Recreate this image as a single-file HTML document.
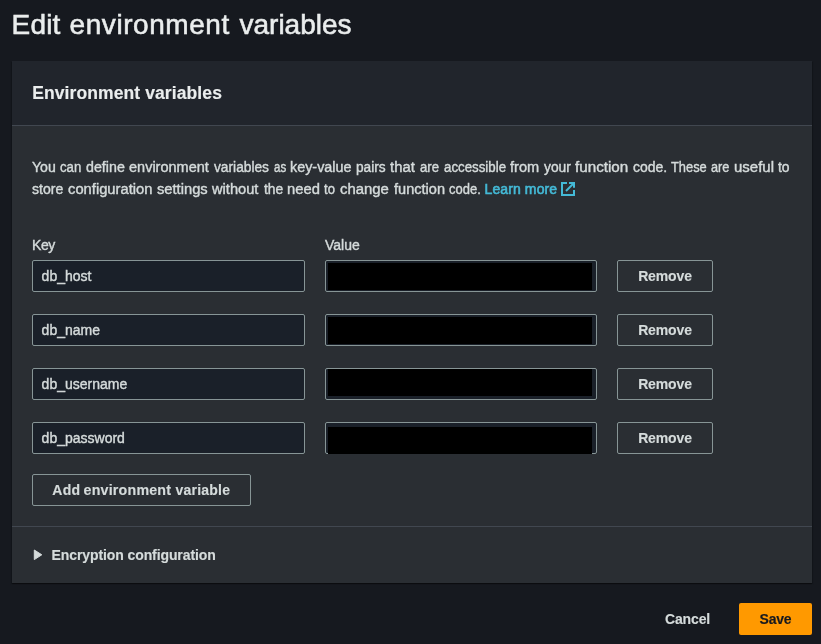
<!DOCTYPE html>
<html lang="en">
<head>
<meta charset="utf-8">
<title>Edit environment variables</title>
<style>
*{box-sizing:border-box;margin:0;padding:0}
html,body{width:821px;height:644px;overflow:hidden;background:#16191f}
body{-webkit-text-stroke:0.4px;position:relative;font-family:"Liberation Sans",Arial,sans-serif;color:#d5dbdb;font-size:14px;line-height:22px;-webkit-font-smoothing:antialiased}
h1{will-change:transform;-webkit-text-stroke:0.55px;position:absolute;left:11.6px;top:7px;width:400px;height:36px;font-size:28px;line-height:36px;font-weight:400;color:#eaeded;white-space:nowrap}
.card{will-change:transform;position:absolute;left:12px;top:61px;width:800px;height:522px;background:#2a2e33;box-shadow:0 1px 1px 0 rgba(0,0,0,.3),1px 1px 1px 0 rgba(0,0,0,.15),-1px 1px 1px 0 rgba(0,0,0,.15)}
.card-h{position:absolute;left:0;top:0;width:800px;height:65px;background:#21252c;border-bottom:1px solid #414750}
h2{-webkit-text-stroke:0.15px;position:absolute;left:20.2px;top:21px;letter-spacing:0.1px;font-size:17.5px;line-height:22px;font-weight:700;color:#eaeded;white-space:nowrap}
.desc{position:absolute;left:20.2px;top:95px;width:770px;font-size:14px;line-height:22px;color:#d5dbdb}
.desc a{color:#44b9d6;text-decoration:none;font-weight:400;-webkit-text-stroke:0.6px #44b9d6;position:absolute;left:452.4px;top:22px;letter-spacing:0.1px}
.w{position:absolute;white-space:nowrap;transform-origin:0 50%}
.lbl{position:absolute;top:173px;font-size:14px;line-height:22px;color:#d5dbdb}
.inp{position:absolute;height:32px;width:273px;border:1px solid #879596;border-radius:2px;background:#1a2029;padding:4px 8.6px;font-size:14px;line-height:22px;color:#d5dbdb;white-space:nowrap}
.red{position:absolute;background:#000}
.btn{-webkit-text-stroke:0.15px;letter-spacing:-0.12px;position:absolute;height:32px;border:1px solid #879596;border-radius:2px;font-size:14px;line-height:22px;font-weight:700;color:#d5dbdb;text-align:center;padding-top:4px;white-space:nowrap}
.hr{position:absolute;left:0;top:465px;width:800px;height:1px;background:#414750}
.enc{-webkit-text-stroke:0.15px;position:absolute;letter-spacing:-0.1px;left:39.6px;top:483px;font-size:14px;line-height:22px;font-weight:700;color:#d5dbdb;white-space:nowrap}
.cancel{will-change:transform;-webkit-text-stroke:0.15px;letter-spacing:-0.15px;position:absolute;left:664.6px;top:608px;font-size:14px;line-height:22px;font-weight:700;color:#d5dbdb}
.save{will-change:transform;-webkit-text-stroke:0.15px;letter-spacing:-0.2px;position:absolute;left:739px;top:603px;width:73px;height:32px;background:#ff9900;border-radius:2px;font-size:14px;line-height:22px;font-weight:700;color:#16191f;text-align:center;padding-top:5px}
</style>
</head>
<body>
<h1><span style="position:absolute;left:-0.4px;letter-spacing:0.15px">Edit</span> <span style="position:absolute;left:57.6px;letter-spacing:0.55px">environment</span> <span style="position:absolute;left:227.5px;letter-spacing:0.0px">variables</span></h1>
<div class="card">
  <div class="card-h"><h2>Environment variables</h2></div>
  <div class="desc"><span class="w" style="left:-0.14px;top:0px;transform:scaleX(1.0068)">You</span> <span class="w" style="left:27.81px;top:0px;transform:scaleX(0.9452)">can</span> <span class="w" style="left:53.38px;top:0px;transform:scaleX(1.0178)">define</span> <span class="w" style="left:96.68px;top:0px;transform:scaleX(1.0360)">environment</span> <span class="w" style="left:181.80px;top:0px;transform:scaleX(0.9810)">variables</span> <span class="w" style="left:241.44px;top:0px;transform:scaleX(0.8200)">as</span> <span class="w" style="left:257.61px;top:0px;transform:scaleX(1.0258)">key-value</span> <span class="w" style="left:323.46px;top:0px;transform:scaleX(0.9781)">pairs</span> <span class="w" style="left:357.80px;top:0px;transform:scaleX(1.0620)">that</span> <span class="w" style="left:387.81px;top:0px;transform:scaleX(0.9393)">are</span> <span class="w" style="left:411.41px;top:0px;transform:scaleX(0.9491)">accessible</span> <span class="w" style="left:478.10px;top:0px;transform:scaleX(1.0420)">from</span> <span class="w" style="left:511.50px;top:0px;transform:scaleX(0.9861)">your</span> <span class="w" style="left:543.30px;top:0px;transform:scaleX(1.0856)">function</span> <span class="w" style="left:600.79px;top:0px;transform:scaleX(1.0002)">code.</span> <span class="w" style="left:638.80px;top:0px;transform:scaleX(0.9185)">These</span> <span class="w" style="left:679.02px;top:0px;transform:scaleX(0.9090)">are</span> <span class="w" style="left:701.66px;top:0px;transform:scaleX(1.0698)">useful</span> <span class="w" style="left:746.10px;top:0px;transform:scaleX(0.9930)">to</span>
<span class="w" style="left:-0.12px;top:22px;transform:scaleX(1.0026)">store</span> <span class="w" style="left:35.58px;top:22px;transform:scaleX(1.0536)">configuration</span> <span class="w" style="left:124.57px;top:22px;transform:scaleX(1.0506)">settings</span> <span class="w" style="left:180.11px;top:22px;transform:scaleX(1.0461)">without</span> <span class="w" style="left:231.90px;top:22px;transform:scaleX(0.9897)">the</span> <span class="w" style="left:255.14px;top:22px;transform:scaleX(1.0543)">need</span> <span class="w" style="left:292.30px;top:22px;transform:scaleX(0.9325)">to</span> <span class="w" style="left:307.88px;top:22px;transform:scaleX(1.0650)">change</span> <span class="w" style="left:361.70px;top:22px;transform:scaleX(1.0403)">function</span> <span class="w" style="left:417.01px;top:22px;transform:scaleX(0.9270)">code.</span>
<a>Learn more</a><svg class="ext" width="16" height="16" viewBox="0 0 16 16" style="position:absolute;left:527.8px;top:25px" fill="none" stroke="#44b9d6" stroke-width="2"><path d="M9 2h5v4.8"/><path d="M6 10l8-8"/><path d="M14 9.048V14H2V2h5"/></svg></div>

  <div class="lbl" style="left:20px;letter-spacing:-0.4px">Key</div>
  <div class="lbl" style="left:313px">Value</div>

  <div class="inp" style="left:20px;top:199px">db_host</div>
  <div class="inp" style="left:313px;top:199px;width:272px"></div>
  <div class="red" style="left:316px;top:202px;width:264px;height:27px"></div>
  <div class="btn" style="left:605px;top:199px;width:96px">Remove</div>

  <div class="inp" style="left:20px;top:253px">db_name</div>
  <div class="inp" style="left:313px;top:253px;width:272px"></div>
  <div class="red" style="left:316px;top:256px;width:264px;height:27px"></div>
  <div class="btn" style="left:605px;top:253px;width:96px">Remove</div>

  <div class="inp" style="left:20px;top:307px">db_username</div>
  <div class="inp" style="left:313px;top:307px;width:272px"></div>
  <div class="red" style="left:316px;top:308px;width:264px;height:27px"></div>
  <div class="btn" style="left:605px;top:307px;width:96px">Remove</div>

  <div class="inp" style="left:20px;top:361px">db_password</div>
  <div class="inp" style="left:313px;top:361px;width:272px"></div>
  <div class="red" style="left:316px;top:366px;width:264px;height:27px"></div>
  <div class="btn" style="left:605px;top:361px;width:96px">Remove</div>

  <div class="btn" style="left:20px;top:413px;width:219px;letter-spacing:0.2px;padding-left:0.5px"><span style="position:relative;left:-1px">Add</span> <span style="display:inline-block;transform:scaleX(1.017);transform-origin:100% 50%">environment</span> variable</div>

  <div class="hr"></div>
  <svg width="12" height="13" viewBox="0 0 12 13" style="position:absolute;left:21px;top:488.3px"><path d="M1.3 1L8.8 5.8L1.3 10.6Z" fill="#d5dbdb" stroke="#d5dbdb" stroke-width="1" stroke-linejoin="round"/></svg>
  <div class="enc">Encryption configuration</div>
</div>
<div class="cancel">Cancel</div>
<div class="save">Save</div>
</body>
</html>
